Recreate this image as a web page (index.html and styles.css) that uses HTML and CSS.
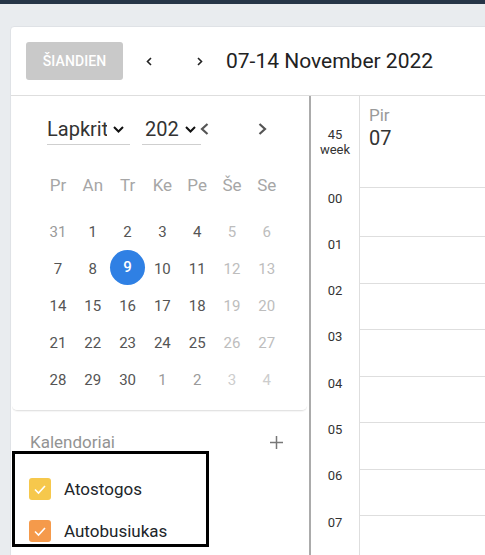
FILE: index.html
```html
<!DOCTYPE html>
<html lang="lt">
<head>
<meta charset="utf-8">
<title>Kalendorius</title>
<link rel="stylesheet" href="styles.css">
</head>
<body>
<div class="topbar"></div>
<div class="page">
  <div class="card">
    <div class="toolbar">
      <button class="today">ŠIANDIEN</button>
      <button class="nav nav-prev" aria-label="Ankstesnė"><svg width="7" height="9" viewBox="0 0 7 9"><polyline points="5,1 1.5,4.5 5,8" fill="none" stroke="#222" stroke-width="1.6"/></svg></button>
      <button class="nav nav-next" aria-label="Kita"><svg width="7" height="9" viewBox="0 0 7 9"><polyline points="2,1 5.5,4.5 2,8" fill="none" stroke="#222" stroke-width="1.6"/></svg></button>
      <h1 class="title">07-14 November 2022</h1>
    </div>
    <div class="body">
      <aside class="sidebar">
        <div class="mini">
          <div class="mini-nav">
            <div class="select sel-month"><span class="sel-text">Lapkritis</span><svg class="caret" width="11" height="7" viewBox="0 0 11 7"><polyline points="1,1 5.5,5.5 10,1" fill="none" stroke="#111" stroke-width="2"/></svg></div>
            <div class="select sel-year"><span class="sel-text">2022</span><svg class="caret" width="11" height="7" viewBox="0 0 11 7"><polyline points="1,1 5.5,5.5 10,1" fill="none" stroke="#111" stroke-width="2"/></svg></div>
            <svg class="mini-prev" width="9" height="12" viewBox="0 0 9 12"><polyline points="7.5,1 2,6 7.5,11" fill="none" stroke="#555" stroke-width="2.2"/></svg>
            <svg class="mini-next" width="9" height="12" viewBox="0 0 9 12"><polyline points="1.5,1 7,6 1.5,11" fill="none" stroke="#555" stroke-width="2.2"/></svg>
          </div>
          <div class="weekdays">
            <div>Pr</div><div>An</div><div>Tr</div><div>Ke</div><div>Pe</div><div>Še</div><div>Se</div>
          </div>
          <div class="days">
            <div class="day other">31</div><div class="day">1</div><div class="day">2</div><div class="day">3</div><div class="day">4</div><div class="day weekend">5</div><div class="day weekend">6</div>
            <div class="day">7</div><div class="day">8</div><div class="day"><span class="today-dot">9</span></div><div class="day">10</div><div class="day">11</div><div class="day weekend">12</div><div class="day weekend">13</div>
            <div class="day">14</div><div class="day">15</div><div class="day">16</div><div class="day">17</div><div class="day">18</div><div class="day weekend">19</div><div class="day weekend">20</div>
            <div class="day">21</div><div class="day">22</div><div class="day">23</div><div class="day">24</div><div class="day">25</div><div class="day weekend">26</div><div class="day weekend">27</div>
            <div class="day">28</div><div class="day">29</div><div class="day">30</div><div class="day other">1</div><div class="day other">2</div><div class="day other-weekend">3</div><div class="day other-weekend">4</div>
          </div>
        </div>
        <div class="cal-head">
          <span>Kalendoriai</span>
          <svg width="13" height="13" viewBox="0 0 13 13"><path d="M6.5 0V13M0 6.5H13" stroke="#777" stroke-width="1.5"/></svg>
        </div>
        <div class="cal-list">
          <div class="cal-item"><span class="check check-yellow"><svg width="22" height="22" viewBox="0 0 22 22"><polyline points="6,11.5 9.5,15 16,8" fill="none" stroke="#fff" stroke-width="1.6"/></svg></span>Atostogos</div>
          <div class="cal-item"><span class="check check-orange"><svg width="22" height="22" viewBox="0 0 22 22"><polyline points="6,11.5 9.5,15 16,8" fill="none" stroke="#fff" stroke-width="1.6"/></svg></span>Autobusiukas</div>
        </div>
      </aside>
      <div class="divider"></div>
      <div class="week">
        <div class="week-head">
          <div class="weeknum">45<br>week</div>
          <div class="dayhead"><div class="dname">Pir</div><div class="dnum">07</div></div>
        </div>
        <div class="week-body">
          <div class="hours">
            <div class="hour">00</div><div class="hour">01</div><div class="hour">02</div><div class="hour">03</div><div class="hour">04</div><div class="hour">05</div><div class="hour">06</div><div class="hour">07</div>
          </div>
          <div class="daycol">
            <div class="slot"></div><div class="slot"></div><div class="slot"></div><div class="slot"></div><div class="slot"></div><div class="slot"></div><div class="slot"></div><div class="slot"></div>
          </div>
        </div>
      </div>
    </div>
  </div>
</div>
</body>
</html>
```
FILE: styles.css
```css
* { box-sizing: border-box; }
html, body { margin: 0; padding: 0; }
body {
  background: #e9ecef;
  font-family: Roboto, "Liberation Sans", Arial, sans-serif;
  color: #222;
  overflow: hidden;
  height: 555px;
}
.topbar { height: 4px; background: #263547; }
.page { padding: 22px 0 0 10px; }
.card {
  width: 520px;
  height: 620px;
  background: #fff;
  border: 1px solid #dfe2e6;
  border-radius: 4px;
}
.toolbar {
  display: flex;
  align-items: center;
  height: 69px;
  padding: 15px 0 15px 15px;
  border-bottom: 1px solid #dedede;
}
.today {
  width: 97px;
  height: 38px;
  border: none;
  border-radius: 3px;
  background: #c9c9c9;
  color: #fff;
  font-family: inherit;
  font-size: 14px;
  font-weight: 500;
  padding: 0;
  letter-spacing: 0.1px;
}
.nav {
  width: 32px;
  height: 32px;
  border: none;
  background: none;
  padding: 0;
  display: flex;
  align-items: center;
  justify-content: center;
}
.nav-prev { margin-left: 10px; }
.nav-next { margin-left: 18px; }
.title {
  margin: 0 0 0 11px;
  font-size: 21px;
  font-weight: 400;
  color: #222;
  line-height: 26px;
}
.body { display: flex; height: 560px; }
.sidebar { width: 298px; flex: none; }
.divider { width: 2px; background: #ababab; flex: none; }
.mini {
  margin: 0 2px 0 1px;
  padding-bottom: 12px;
  border-bottom: 1px solid #e3e3e3;
  border-radius: 0 0 5px 5px;
  box-shadow: 0 1px 1px rgba(0,0,0,0.04);
}
.mini-nav {
  display: flex;
  align-items: center;
  padding: 18px 0 0 35px;
}
.select {
  display: flex;
  align-items: center;
  height: 31px;
  border-bottom: 1px solid #cfcfcf;
  font-size: 20px;
  color: #333;
}
.sel-text { overflow: hidden; white-space: nowrap; line-height: 30px; }
.sel-month { width: 83px; }
.sel-month .sel-text { width: 60px; }
.sel-month .caret { margin-left: 6px; }
.sel-year { width: 59px; margin-left: 12px; padding-left: 3px; }
.sel-year .sel-text { width: 34px; }
.sel-year .caret { margin-left: 6px; }
.mini-prev { margin-left: -1px; margin-top: -2px; }
.mini-next { margin-left: 49px; margin-top: -2px; }
.weekdays, .days {
  display: grid;
  grid-template-columns: repeat(7, 34.8px);
  margin-left: 28.6px;
}
.weekdays { margin-top: 22px; margin-bottom: 9px; }
.weekdays div {
  height: 37px;
  line-height: 37px;
  text-align: center;
  font-size: 17px;
  color: #a6a6a6;
}
.day {
  height: 37px;
  display: flex;
  align-items: center;
  justify-content: center;
  font-size: 15px;
  color: #555;
}
.day.weekend { color: #bdbdbd; }
.day.other { color: #9a9a9a; }
.day.other-weekend { color: #cdcdcd; }
.today-dot {
  width: 35px;
  height: 35px;
  border-radius: 50%;
  background: #2f80e4;
  color: #fff;
  font-weight: 500;
  display: flex;
  align-items: center;
  justify-content: center;
  margin-top: -3px;
}
.cal-head {
  display: flex;
  justify-content: space-between;
  align-items: center;
  height: 18px;
  margin-top: 22px;
  padding: 0 26px 0 19px;
  font-size: 17px;
  color: #939393;
  line-height: 20px;
}
.cal-list {
  position: relative;
  margin-left: 1px;
  width: 197px;
  height: 96px;
  border: 3px solid #000;
  background: #fff;
  padding: 24px 0 0 14px;
  overflow: hidden;
}
.cal-item {
  display: flex;
  align-items: center;
  gap: 13px;
  height: 22px;
  margin-bottom: 20px;
  font-size: 17px;
  color: #212529;
}
.check {
  width: 22px;
  height: 22px;
  border-radius: 3px;
  display: block;
  flex: none;
}
.check svg { display: block; }
.check-yellow { background: #f6c84c; }
.check-orange { background: #f59a4b; }
.week { flex: 1; display: flex; flex-direction: column; }
.week-head { display: flex; height: 92px; }
.weeknum {
  width: 49px;
  border-right: 1px solid #dedede;
  text-align: center;
  font-size: 13px;
  line-height: 15px;
  padding-top: 31px;
  color: #333;
}
.dayhead {
  flex: 1;
  border-bottom: 1px solid #dedede;
  padding: 9px 0 0 9px;
}
.dname { font-size: 17px; line-height: 20px; color: #9a9a9a; }
.dnum { font-size: 20px; line-height: 26px; color: #333; }
.week-body { display: flex; }
.hours { width: 48px; padding-top: 2.5px; }
.hour {
  height: 46.3px;
  line-height: 15px;
  text-align: center;
  font-size: 13px;
  color: #333;
}
.daycol {
  flex: 1;
  border-left: 1px solid #dedede;
  padding-top: 2.5px;
}
.slot {
  height: 46.55px;
  border-bottom: 1px solid #dedede;
}
```
